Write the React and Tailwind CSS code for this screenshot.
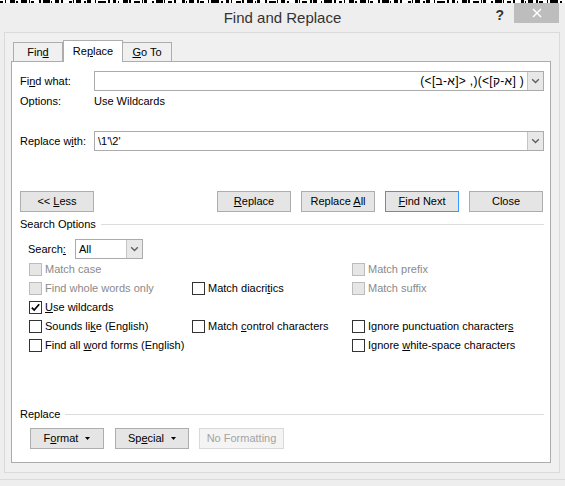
import React from 'react';

const NOISE = [3, 2, 1, 4, 5, 1, 2, 3, 6, 2, 1, 1, 3, 5, 2, 2, 7, 1, 1, 3, 4, 2, 2, 6, 3, 1, 1, 2, 5, 3, 2, 1, 4, 4, 1, 2, 8, 2, 2, 3];

// strip of the document showing behind the dialog
function Noise() {
  const rects = [];
  let x = 0;
  let i = 0;
  while (x < 565) {
    const w = NOISE[i % NOISE.length];
    if (i % 2 === 0) rects.push(<rect key={i} x={x} y={i % 6 === 0 ? 1 : 0} width={w} height={i % 6 === 0 ? 2 : 3} fill="#000" />);
    x += w;
    i++;
  }
  return (
    <svg className="block" width="565" height="3" viewBox="0 0 565 3">
      <rect width="565" height="3" fill="#fff" />
      {rects}
    </svg>
  );
}

function Chevron() {
  return (
    <svg width="9" height="6" viewBox="0 0 9 6">
      <path d="M1.2 1.2L4.5 4.5L7.8 1.2" fill="none" stroke="#606060" strokeWidth="1.4" />
    </svg>
  );
}

function Btn({ children, primary, disabled, className = 'w-[74px]' }) {
  let tone = 'border-[#adadad] bg-[#e5e5e5] text-black';
  if (primary) tone = 'border-[#3399ff] bg-[#e5e5e5] text-black';
  if (disabled) tone = 'border-[#d9d9d9] bg-[#f4f4f4] text-[#a3a3a3]';
  return (
    <div className={`flex h-[21px] shrink-0 items-center justify-center border text-[11px] ${tone} ${className}`}>
      {children}
    </div>
  );
}

function Check({ checked, disabled, children }) {
  return (
    <div className="flex h-[19px] items-center">
      <div
        className={
          disabled
            ? 'flex h-[13px] w-[13px] shrink-0 items-center justify-center border border-[#bcbcbc] bg-[#e6e6e6]'
            : 'flex h-[13px] w-[13px] shrink-0 items-center justify-center border border-[#333333] bg-white'
        }
      >
        {checked && (
          <svg width="11" height="11" viewBox="0 0 11 11">
            <path d="M1.8 5.6L4.2 8L9.2 2.2" fill="none" stroke="#000" strokeWidth="1.7" />
          </svg>
        )}
      </div>
      <span className={disabled ? 'ml-[3px] whitespace-nowrap text-[#8a8a8a]' : 'ml-[3px] whitespace-nowrap text-black'}>{children}</span>
    </div>
  );
}

function Section({ title }) {
  return (
    <div className="flex h-[14px] items-center">
      <span className="whitespace-nowrap">{title}</span>
      <div className="ml-[5px] h-px flex-1 bg-[#dcdcdc]" />
    </div>
  );
}

function Combo({ children, className }) {
  return (
    <div className={`flex h-[20px] items-stretch border border-[#ababab] bg-white ${className}`}>
      <div className="flex min-w-0 flex-1 items-center overflow-hidden px-[3px]">{children}</div>
      <div className="flex w-[16px] items-center justify-center border-l border-[#c4c4c4] bg-[#e8e8e8]">
        <Chevron />
      </div>
    </div>
  );
}

const U = ({ children }) => <span className="underline underline-offset-[1px]">{children}</span>;

const Caret = () => (
  <svg className="ml-[7px]" width="5" height="3" viewBox="0 0 5 3">
    <path d="M0 0H5L2.5 3Z" fill="#000" />
  </svg>
);

export default function App() {
  return (
    <div className="h-[486px] w-[565px] overflow-hidden bg-[#eeeeee] font-['Liberation_Sans',Arial,sans-serif] text-[11px] text-black">
      <Noise />

      {/* title bar */}
      <div className="grid h-[29px] grid-cols-[1fr_auto_1fr]">
        <div />
        <div className="flex items-center pt-[2px] text-[15px] text-[#333333]">Find and Replace</div>
        <div className="flex items-start justify-end pr-[6px]">
          <span className="mr-[10px] mt-[2px] text-[14px] font-bold text-[#333333]">?</span>
          <div className="flex h-[20px] w-[45px] items-center justify-center bg-[#bdbdbd]">
            <svg width="10" height="10" viewBox="0 0 10 10">
              <path d="M1 1L9 9M9 1L1 9" stroke="#fff" strokeWidth="1.5" />
            </svg>
          </div>
        </div>
      </div>

      {/* client area */}
      <div className="ml-[4px] h-[441px] w-[556px] border border-[#dadada] bg-[#f0f0f0] pl-[6px] pt-[7px]">
        <div className="relative z-10 -mb-px ml-[2px] flex h-[22px] items-end">
          <div className="flex h-[20px] w-[50px] items-center justify-center border border-[#adadad] bg-[#f0f0f0]">
            <span>
              Fin<U>d</U>
            </span>
          </div>
          <div className="flex h-[22px] w-[60px] items-center justify-center border border-b-0 border-[#adadad] bg-white pb-[1px]">
            <span>
              Re<U>p</U>lace
            </span>
          </div>
          <div className="flex h-[20px] w-[49px] items-center justify-center border border-l-0 border-[#adadad] bg-[#f0f0f0]">
            <span>
              <U>G</U>o To
            </span>
          </div>
        </div>

        <div className="h-[402px] w-[540px] border border-[#acacac] bg-white pl-[8px] pr-[6px] pt-[9px]">
          <div className="flex h-[20px] items-center">
            <span className="w-[74px] shrink-0">
              Fi<U>n</U>d what:
            </span>
            <Combo className="flex-1">
              <div className="flex w-full justify-end text-[12px] tracking-[0.3px]">
                <bdo dir="ltr" className="whitespace-pre">(&lt;[ב-א]&gt; ,)(&lt;[ק-א] )</bdo>
              </div>
            </Combo>
          </div>
          <div className="flex h-[20px] items-center">
            <span className="w-[74px] shrink-0">Options:</span>
            <span>Use Wildcards</span>
          </div>
          <div className="mt-[20px] flex h-[20px] items-center">
            <span className="w-[74px] shrink-0">
              Replace w<U>i</U>th:
            </span>
            <Combo className="flex-1">
              <span>\1'\2'</span>
            </Combo>
          </div>

          <div className="mt-[40px] flex h-[21px] items-center">
            <Btn>
              <span className="whitespace-pre">
                &lt;&lt; <U>L</U>ess
              </span>
            </Btn>
            <div className="ml-auto flex gap-[10px] pr-[1px]">
              <Btn>
                <span>
                  <U>R</U>eplace
                </span>
              </Btn>
              <Btn>
                <span className="whitespace-pre">
                  Replace <U>A</U>ll
                </span>
              </Btn>
              <Btn primary>
                <span className="whitespace-pre">
                  <U>F</U>ind Next
                </span>
              </Btn>
              <Btn>
                <span>Close</span>
              </Btn>
            </div>
          </div>

          <div className="mt-[5px]">
            <Section title="Search Options" />
          </div>

          <div className="mt-[8px] flex h-[20px] items-center pl-[8px]">
            <span className="w-[47px] shrink-0">
              Search<U>:</U>
            </span>
            <Combo className="w-[68px]">
              <span>All</span>
            </Combo>
          </div>

          <div className="mt-[1px] grid grid-cols-[163px_160px_1fr] pl-[9px]">
            <Check disabled>Match case</Check>
            <div />
            <Check disabled>Match prefix</Check>

            <Check disabled>Find whole words only</Check>
            <Check>
              Match diacri<U>t</U>ics
            </Check>
            <Check disabled>Match suffix</Check>

            <Check checked>
              <U>U</U>se wildcards
            </Check>
            <div />
            <div />

            <Check>
              Sounds li<U>k</U>e (English)
            </Check>
            <Check>
              Match <U>c</U>ontrol characters
            </Check>
            <Check>
              Ignore punctuation character<U>s</U>
            </Check>

            <Check>
              Find all <U>w</U>ord forms (English)
            </Check>
            <div />
            <Check>
              Ignore <U>w</U>hite-space characters
            </Check>
          </div>

          <div className="mt-[52px]">
            <Section title="Replace" />
          </div>

          <div className="mt-[7px] flex gap-[10px] pl-[10px]">
            <Btn className="mr-[1px] w-[74px]">
              <span>
                F<U>o</U>rmat
              </span>
              <Caret />
            </Btn>
            <Btn>
              <span>
                Sp<U>e</U>cial
              </span>
              <Caret />
            </Btn>
            <Btn disabled className="w-[85px]">
              <span>No Formatting</span>
            </Btn>
          </div>
        </div>
      </div>
      <div className="mt-[6px] h-px w-full bg-[#dadada]" />
    </div>
  );
}
